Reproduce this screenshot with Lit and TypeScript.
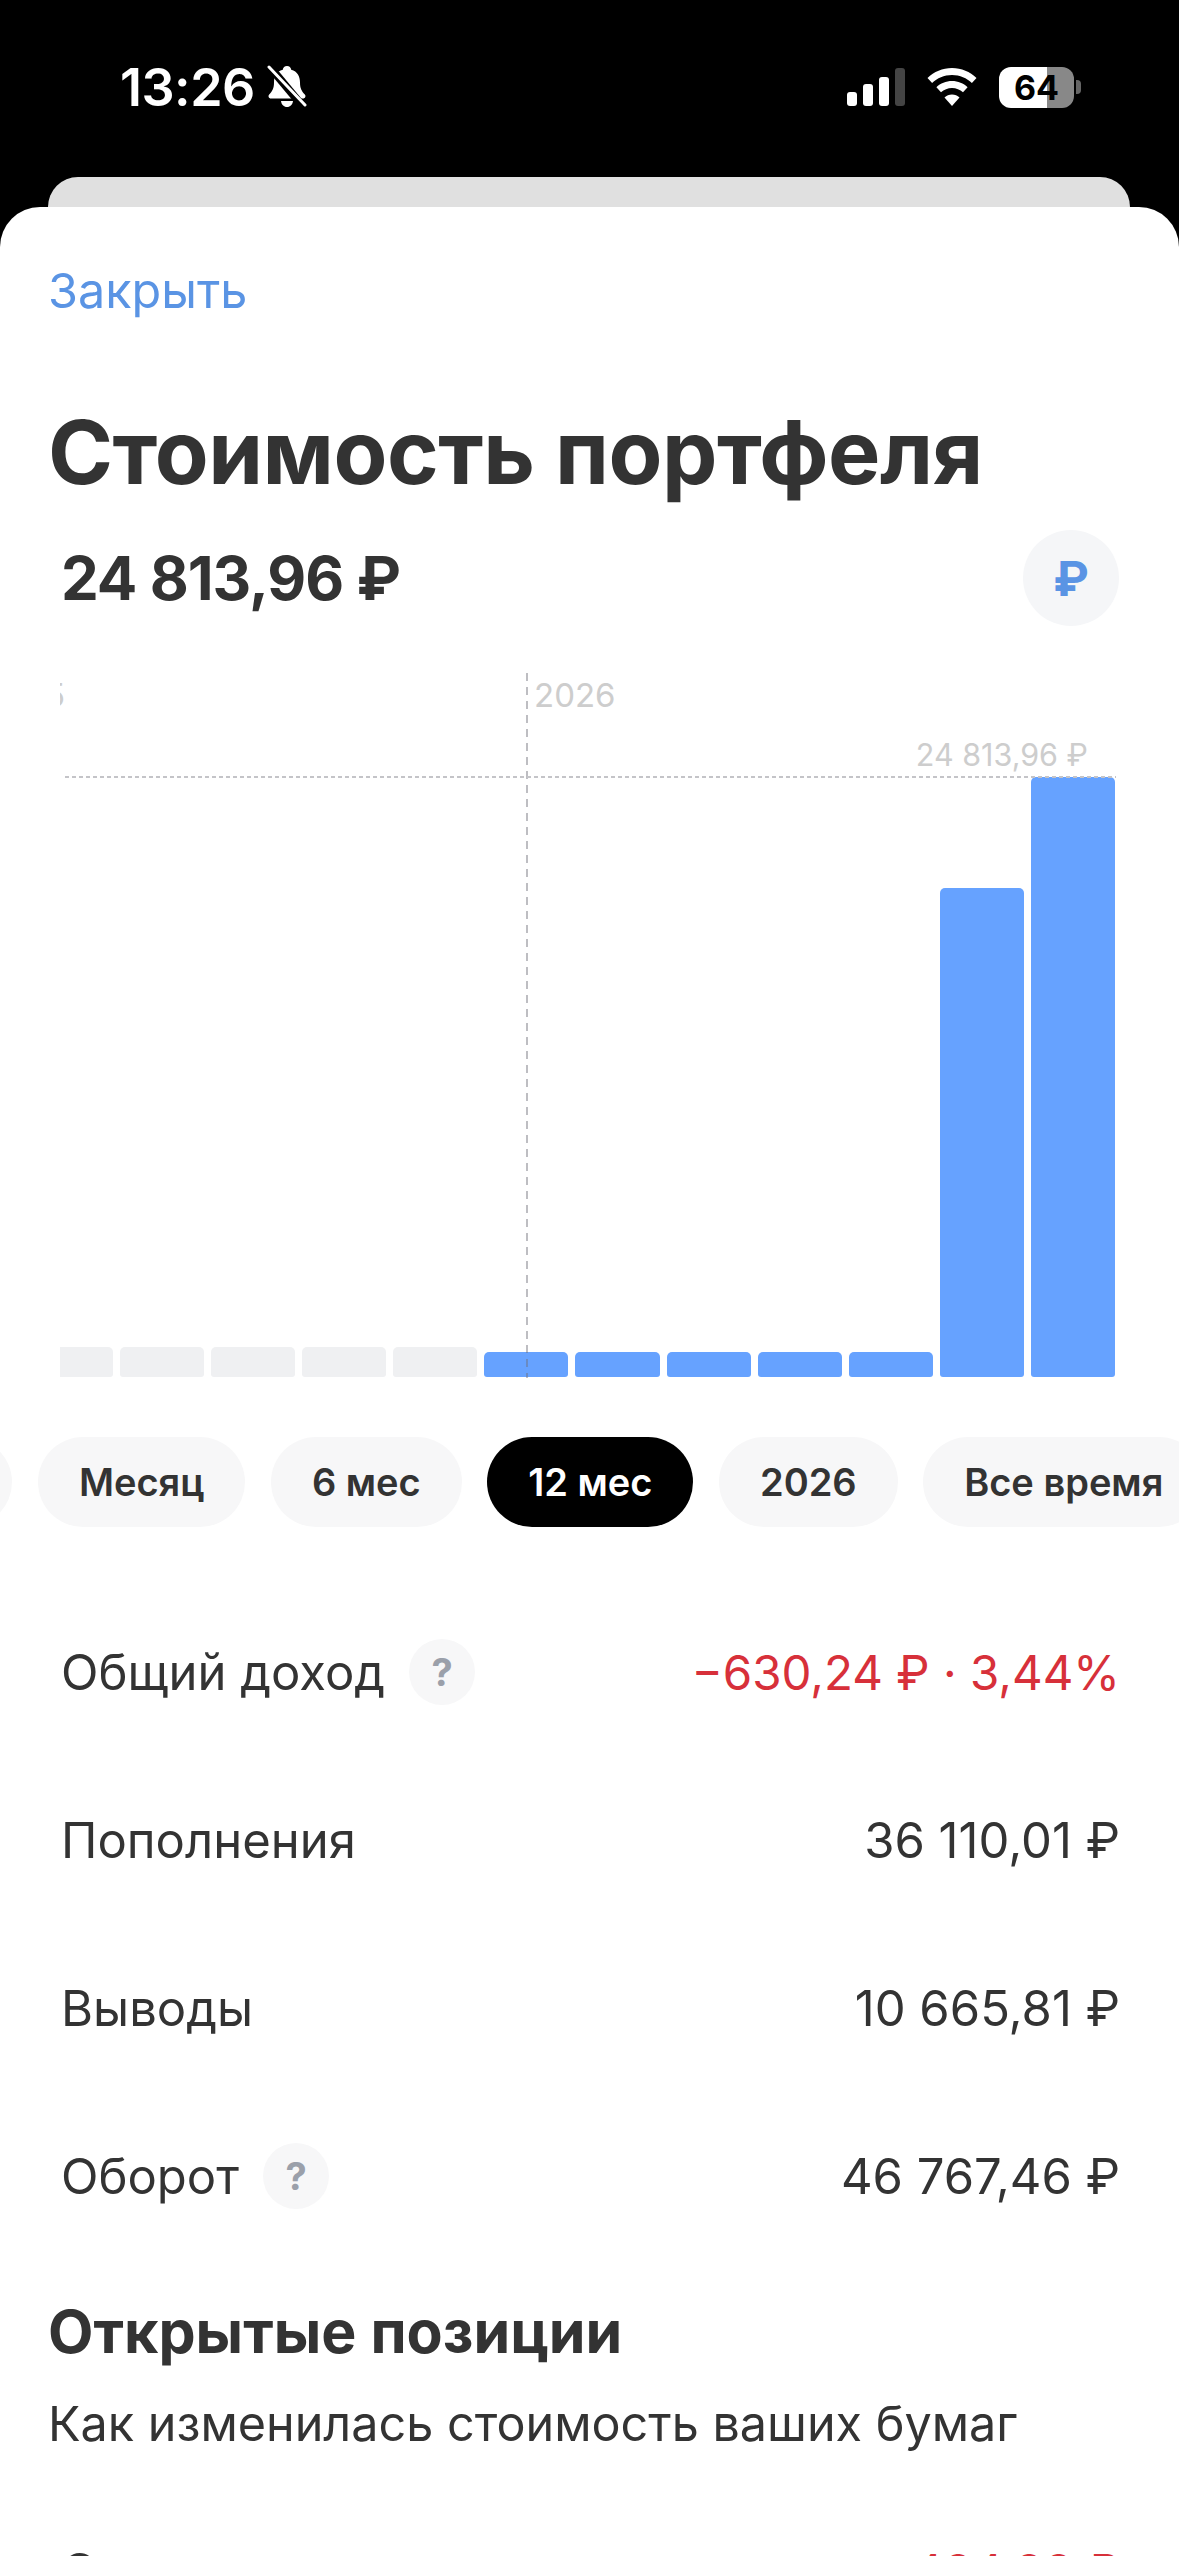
import { LitElement, html, css, svg } from 'lit';
import { customElement } from 'lit/decorators.js';

const PAST_BARS = 5;
const NOW_BARS = [25, 25, 25, 25, 25, 489, 600];
const SIGNAL = [14, 22, 29, 38];
const PERIODS = ['Неделя', 'Месяц', '6 мес', '12 мес', '2026', 'Все время'];

const bell = svg`<svg class="bell" viewBox="0 0 40 44" width="40" height="44">
  <path fill="#fff" d="M20 1c2.400 0 4 1.700 4.200 3.800C30.500 6.500 33 11.500 33 17.500c0 5.500 1.400 8.500 4.800 12 1.400 1.500.5 4-1.800 4H4c-2.300 0-3.200-2.500-1.800-4C5.600 26 7 23 7 17.500 7 11.500 9.500 6.500 15.800 4.800 16 2.700 17.600 1 20 1z"/>
  <path fill="#fff" d="M14 36h12c-.4 3.600-2.800 6-6 6s-5.600-2.400-6-6z"/>
  <path stroke="#000" stroke-width="8" d="M-2 -4L38 44"/>
  <path stroke="#fff" stroke-width="3" stroke-linecap="round" d="M2 2L38 40"/>
</svg>`;

const wifi = svg`<svg viewBox="0 0 50 38" width="50" height="38">
  <path fill="#fff" d="M25 0c9.500 0 18 3.800 24.500 10l-4.600 5C39.700 10 33 7 25 7S10.300 10 5.100 15L.5 10C7 3.800 15.500 0 25 0z"/>
  <path fill="#fff" d="M25 13c6 0 11.500 2.300 15.600 6.200L36 24.200c-3-2.700-6.800-4.300-11-4.300s-8 1.600-11 4.300l-4.600-5C13.500 15.300 19 13 25 13z"/>
  <path fill="#fff" d="M25 26.500c2.900 0 5.500 1.100 7.500 2.900L25 38l-7.500-8.600c2-1.800 4.600-2.900 7.500-2.900z"/>
</svg>`;

@customElement('app-root')
export class AppRoot extends LitElement {
  static styles = css`
    :host {
      display: block;
      width: 1179px;
      height: 2556px;
      overflow: hidden;
      background: #000;
      font-family: Inter, 'Noto Sans', sans-serif;
      color: #333;
    }

    .status {
      height: 177px;
      box-sizing: border-box;
      padding: 60px 98px 0 120px;
      display: flex;
      justify-content: space-between;
      color: #fff;
    }

    .status__left {
      display: flex;
      gap: 12px;
      height: 54px;
      align-items: center;
    }

    .status__time {
      font-size: 52px;
      font-weight: 600;
      letter-spacing: -0.5px;
    }

    .status__right {
      display: flex;
      align-items: center;
      height: 54px;
      gap: 22px;
    }

    .signal {
      display: flex;
      align-items: flex-end;
      gap: 6px;
      height: 38px;
    }

    .signal span {
      width: 10px;
      background: #fff;
      border-radius: 3px;
    }

    .signal span:last-child {
      background: #444;
    }

    .battery {
      display: flex;
      align-items: center;
      gap: 2px;
    }

    .battery__body {
      width: 75px;
      height: 41px;
      border-radius: 12px;
      background: linear-gradient(90deg, #fff 64%, #888 64%);
      color: #000;
      font-size: 34px;
      font-weight: 700;
      display: flex;
      align-items: center;
      justify-content: center;
    }

    .battery__tip {
      width: 5px;
      height: 14px;
      background: #666;
      border-radius: 0 4px 4px 0;
    }

    .back-card {
      height: 30px;
      margin: 0 49px 0 48px;
      background: #e0e0e0;
      border-radius: 30px 30px 0 0;
    }

    .sheet {
      background: #fff;
      border-radius: 40px 40px 0 0;
      height: 2349px;
      overflow: hidden;
    }

    .close {
      padding: 56px 48px 0;
      font-size: 48.500px;
      line-height: 56px;
      color: #5a94e4;
    }

    .title {
      margin: 82px 48px 0;
      font-size: 88px;
      line-height: 102px;
      font-weight: 700;
      letter-spacing: -0.5px;
    }

    .total {
      display: flex;
      align-items: center;
      justify-content: space-between;
      margin: 27px 60px 0 61px;
      height: 96px;
      font-size: 60px;
      font-weight: 700;
      letter-spacing: -1px;
    }

    .currency {
      width: 96px;
      height: 96px;
      border-radius: 50%;
      background: #f5f6f8;
      color: #5a94e4;
      font-size: 48px;
      font-weight: 700;
      letter-spacing: 0;
      display: flex;
      align-items: center;
      justify-content: center;
    }

    .chart {
      position: relative;
      margin-top: 47px;
      height: 705px;
      overflow: hidden;
    }

    .bars {
      position: absolute;
      left: 60px;
      bottom: 1px;
      display: flex;
      align-items: flex-end;
      gap: 7px;
    }

    .bar {
      flex: 0 0 84.100px;
      border-radius: 5px 5px 3px 3px;
    }

    .bar--first {
      flex-basis: 53px;
      border-radius: 0 5px 3px 0;
    }

    .bar--past {
      height: 30px;
      background: #eff0f2;
    }

    .bar--now {
      background: #66a2ff;
    }

    .v-line {
      position: absolute;
      left: 526px;
      top: 0;
      bottom: 0;
      width: 2px;
      background: repeating-linear-gradient(180deg, rgba(110, 110, 120, 0.45) 0 8px, transparent 8px 14px);
    }

    .h-line {
      position: absolute;
      left: 65px;
      right: 63px;
      top: 103px;
      height: 2px;
      background: repeating-linear-gradient(90deg, #c4c4c8 0 4px, transparent 4px 7px);
    }

    .tick {
      position: absolute;
      font-size: 33px;
      line-height: 40px;
      color: #cdcdcd;
      white-space: nowrap;
    }

    .tick--year {
      left: 534px;
      top: 2px;
    }

    .tick--prev {
      left: 60px;
      top: 2px;
      width: 5px;
      overflow: hidden;
      direction: rtl;
    }

    .tick--value {
      right: 91px;
      top: 62px;
      font-size: 30.500px;
    }

    .periods {
      display: flex;
      gap: 25.500px;
      margin: 59px 0 0 -212px;
      width: 1500px;
    }

    .period {
      height: 90px;
      padding: 0 41px;
      border-radius: 45px;
      background: #f7f7f8;
      font-size: 38px;
      font-weight: 600;
      display: flex;
      align-items: center;
      white-space: nowrap;
    }

    .period--active {
      background: #000;
      color: #fff;
    }

    .rows {
      margin: 61px 59px 0 61px;
    }

    .row {
      height: 168px;
      display: flex;
      align-items: center;
      justify-content: space-between;
      font-size: 49px;
    }

    .row__label {
      display: flex;
      align-items: center;
      gap: 24px;
    }

    .help {
      width: 66px;
      height: 66px;
      border-radius: 50%;
      background: #f7f7f8;
      color: #9ba0aa;
      font-size: 38px;
      font-weight: 700;
      display: flex;
      align-items: center;
      justify-content: center;
    }

    .red {
      color: #d7303a;
      font-size: 47.500px;
    }

    .section {
      margin: 37px 48px 0;
    }

    .section__title {
      font-size: 59px;
      line-height: 70px;
      font-weight: 700;
      margin: 0;
    }

    .section__sub {
      font-size: 48.500px;
      line-height: 56px;
      margin-top: 29px;
    }

    .rows--next {
      margin-top: 35px;
    }
  `;

  render() {
    return html`
      <div class="status">
        <div class="status__left">
          <span class="status__time">13:26</span>
          ${bell}
        </div>
        <div class="status__right">
          <div class="signal">
            ${SIGNAL.map((h) => html`<span style="height: ${h}px"></span>`)}
          </div>
          ${wifi}
          <div class="battery">
            <div class="battery__body">64</div>
            <div class="battery__tip"></div>
          </div>
        </div>
      </div>
      <div class="back-card"></div>
      <div class="sheet">
        <div class="close">Закрыть</div>
        <h1 class="title">Стоимость портфеля</h1>
        <div class="total">
          <span>24 813,96 ₽</span>
          <div class="currency">₽</div>
        </div>
        <div class="chart">
          <div class="bars">
            ${Array.from({ length: PAST_BARS }, (_, i) => html`<div
              class="bar bar--past ${i === 0 ? 'bar--first' : ''}"
            ></div>`)}
            ${NOW_BARS.map((h) => html`<div class="bar bar--now" style="height: ${h}px"></div>`)}
          </div>
          <div class="v-line"></div>
          <div class="h-line"></div>
          <div class="tick tick--prev">2025</div>
          <div class="tick tick--year">2026</div>
          <div class="tick tick--value">24 813,96 ₽</div>
        </div>
        <div class="periods">
          ${PERIODS.map((p) => html`<div class="period ${p === '12 мес' ? 'period--active' : ''}">${p}</div>`)}
        </div>
        <div class="rows">
          <div class="row">
            <div class="row__label">Общий доход <span class="help">?</span></div>
            <div class="red">−630,24 ₽ · 3,44%</div>
          </div>
          <div class="row"><div class="row__label">Пополнения</div><div>36 110,01 ₽</div></div>
          <div class="row"><div class="row__label">Выводы</div><div>10 665,81 ₽</div></div>
          <div class="row">
            <div class="row__label">Оборот <span class="help">?</span></div>
            <div>46 767,46 ₽</div>
          </div>
        </div>
        <div class="section">
          <h2 class="section__title">Открытые позиции</h2>
          <div class="section__sub">Как изменилась стоимость ваших бумаг</div>
        </div>
        <div class="rows rows--next">
          <div class="row">
            <div class="row__label">Стоимость</div>
            <div class="red">−484,88 ₽</div>
          </div>
        </div>
      </div>
    `;
  }
}
